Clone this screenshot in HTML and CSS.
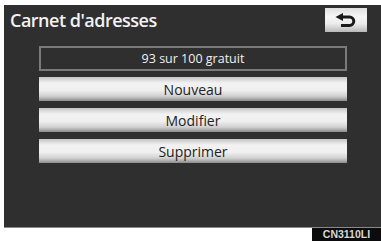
FILE: index.html
```html
<!DOCTYPE html>
<html lang="fr">
<head>
<meta charset="utf-8">
<link rel="stylesheet" href="styles.css">
</head>
<body>
<div class="screen">
  <div class="header">
    <div class="title">Carnet d'adresses</div>
    <div class="back">
      <svg width="22" height="15" viewBox="0 0 22 15">
        <path d="M6 4 H14.5 A4.25 4.25 0 0 1 14.5 12.5 H6" fill="none" stroke="#1a1a1a" stroke-width="3"/>
        <path d="M0.5 4 L8 0 L8 8 Z" fill="#1a1a1a"/>
      </svg>
    </div>
  </div>
  <div class="list">
    <div class="info">93 sur 100 gratuit</div>
    <div class="btn">Nouveau</div>
    <div class="btn">Modifier</div>
    <div class="btn">Supprimer</div>
  </div>
</div>
<div class="footer"><span class="code">CN3110LI</span></div>
</body>
</html>
```
FILE: styles.css
```css
html, body { margin: 0; padding: 0; background: #fff; }
body { width: 381px; height: 242px; overflow: hidden; font-family: "Open Sans", "DejaVu Sans", sans-serif; }
.screen {
  margin: 5px 0 0 4px;
  height: 222px;
  background: #2f2f2f;
  border-bottom: 1px solid #8a8a8a;
  display: flex;
  flex-direction: column;
}
.header {
  display: flex;
  justify-content: space-between;
  align-items: flex-start;
  padding: 3px 14px 0 6px;
  height: 38px;
}
.title {
  color: #f2f2f2;
  font-size: 18px;
  font-weight: 600;
  line-height: 24px;
  letter-spacing: -0.5px;
}
.back {
  width: 42px;
  height: 24px;
  box-sizing: border-box;
  background: linear-gradient(to bottom, #e0e0e0 0%, #f6f6f6 35%, #ececec 65%, #b8b8b8 100%);
  display: flex;
  align-items: center;
  justify-content: center;
}
.list {
  margin-left: 35px;
  width: 308px;
  display: flex;
  flex-direction: column;
  gap: 7px;
}
.info {
  height: 25px;
  box-sizing: border-box;
  border: 2px solid #7a7a7a;
  color: #f0f0f0;
  font-size: 12.5px;
  display: flex;
  align-items: center;
  justify-content: center;
  margin-bottom: -1px;
}
.btn {
  height: 24px;
  box-sizing: border-box;
  background: linear-gradient(to bottom, #c4c4c4 0%, #f2f2f2 25%, #f0f0f0 55%, #d0d0d0 80%, #8c8c8c 100%);
  color: #222;
  font-size: 14px;
  display: flex;
  align-items: center;
  justify-content: center;
}
.footer {
  display: flex;
  justify-content: flex-end;
}
.code {
  background: #0c0c0c;
  color: #d8d8d8;
  font-family: "Liberation Sans", Arial, sans-serif;
  font-weight: bold;
  font-size: 10.5px;
  line-height: 13px;
  width: 69px;
  text-align: center;
}
```
